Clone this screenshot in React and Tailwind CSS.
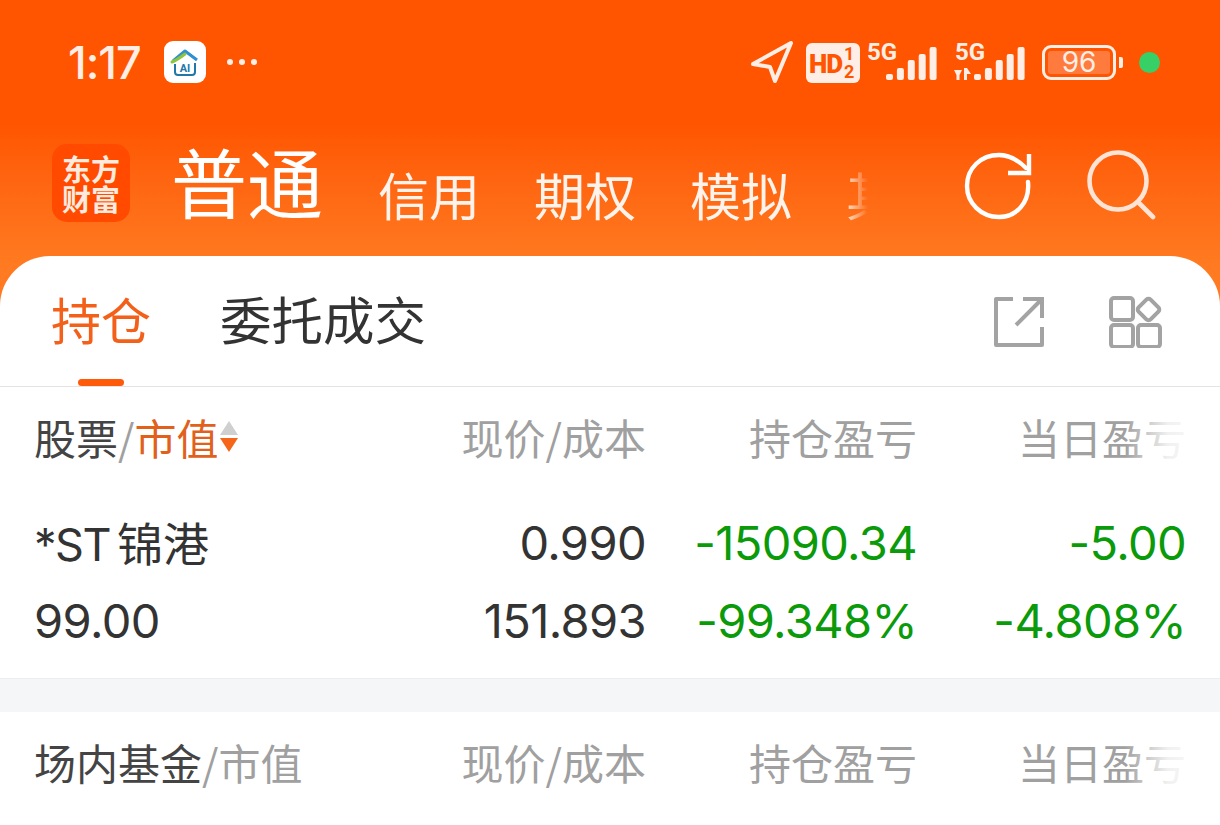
import React from "react";

const cjk = { fontFamily: '"Noto Sans CJK SC", sans-serif' };

const Bars = ({ heights, x = 0 }) => (
  <>
    {heights.map((h, i) => (
      <rect key={i} x={x + i * 10.9} y={38 - h} width="7" height={h} rx="2" fill="#ffeee5" />
    ))}
  </>
);

const StatusBar = () => (
  <div className="flex h-[125px] items-center justify-between pl-[68px] pr-[60px] pb-[1px]">
    <div className="flex items-center">
      <span className="w-[74px] text-[45px] font-medium leading-none tracking-[-1px] text-[#ffeee5] font-['Inter',sans-serif]">1:17</span>
      <div className="ml-[22px] flex h-[42px] w-[42px] items-center justify-center rounded-[9px] bg-white">
        <svg width="32" height="30" viewBox="0 0 32 30" fill="none">
          <path d="M4 14 L16 4 L28 13" stroke="#2f8fd0" strokeWidth="3" strokeLinejoin="round" />
          <path d="M3 15 C8 13 12 10 16 7" stroke="#8cc63f" strokeWidth="3" strokeLinecap="round" />
          <path d="M6 17 V25 C6 27 7 28 9 28 H23 C25 28 26 27 26 25 V16" stroke="#2277aa" strokeWidth="2" />
          <text x="16" y="25" textAnchor="middle" fontSize="11" fontWeight="700" fill="#2277aa" fontFamily="Roboto, sans-serif">AI</text>
        </svg>
      </div>
      <div className="ml-[21px] flex gap-[6px]">
        <span className="h-[6px] w-[6px] rounded-full bg-[#ffeee5]"></span>
        <span className="h-[6px] w-[6px] rounded-full bg-[#ffeee5]"></span>
        <span className="h-[6px] w-[6px] rounded-full bg-[#ffeee5]"></span>
      </div>
    </div>
    <div className="flex items-center">
      <svg width="44" height="44" viewBox="0 0 44 44" fill="none" className="mr-[12px]">
        <path d="M3 24 L41 3 L25 41 L20 27 Z" stroke="#ffeee5" strokeWidth="4" strokeLinejoin="round" />
      </svg>
      <div className="relative mt-[2px] h-[40px] w-[54px] rounded-[6px] bg-[#ffeee5] text-[#ff5500] font-['Roboto',sans-serif]">
        <span className="absolute left-[3px] top-[8px] text-[26px] font-black leading-none tracking-[-1px]">HD</span>
        <span className="absolute left-[38px] top-[2px] text-[18px] font-bold leading-none">1</span>
        <span className="absolute left-[38px] top-[20px] text-[18px] font-bold leading-none">2</span>
      </div>
      <div className="relative ml-[7px] h-[40px] w-[72px]">
        <span className="absolute left-0 top-[-2px] text-[24px] font-bold leading-none text-[#ffeee5] font-['Roboto',sans-serif]">5G</span>
        <svg width="72" height="40" viewBox="0 0 72 40">
          <Bars heights={[6, 12, 20, 26, 33]} x={19} />
        </svg>
      </div>
      <div className="relative ml-[15px] h-[40px] w-[72px]">
        <span className="absolute left-[1px] top-[-2px] text-[24px] font-bold leading-none text-[#ffeee5] font-['Roboto',sans-serif]">5G</span>
        <svg width="72" height="40" viewBox="0 0 72 40">
          <path d="M0 28 H8 L5.5 33 V38 H2.5 V33 Z M10 38 V26 H13 L17 32 H13 V38 Z" fill="#ffeee5" />
          <Bars heights={[6, 12, 20, 26, 33]} x={20} />
        </svg>
      </div>
      <div className="ml-[16px] flex items-center">
        <div className="flex h-[35px] w-[74px] items-center rounded-[9px] border-[3px] border-[#ffeee5] p-[3px]">
          <div className="flex h-full w-full items-center justify-center rounded-[3px] bg-[#ff7b3d] text-[28px] leading-none text-[#ffeee5] font-['Inter',sans-serif]">96</div>
        </div>
        <div className="ml-[3px] h-[11px] w-[4px] rounded-r-[2px] bg-[#ffeee5]"></div>
      </div>
      <div className="ml-[16px] h-[21px] w-[21px] rounded-full bg-[#37d066]"></div>
    </div>
  </div>
);

const RefreshIcon = () => (
  <svg width="70" height="70" viewBox="0 0 70 70" fill="none" stroke="#fff" strokeWidth="4.4">
    <path d="M64 31 C66 52 52 66 35 66 C17 66 3 52 3 35 C3 17 17 4 35 4 C45 4 54 9 62 17" strokeLinecap="round" />
    <path d="M65 3 V22 H44" />
  </svg>
);

const SearchIcon = () => (
  <svg width="70" height="70" viewBox="0 0 70 70" fill="none" stroke="#ffe4d6" strokeWidth="4.6">
    <circle cx="31" cy="31" r="28.5" />
    <path d="M52 53 L66 67" strokeLinecap="round" />
  </svg>
);

const Header = () => (
  <div className="flex h-[131px] items-start pl-[52px]">
    <div className="mt-[19px] flex h-[78px] w-[78px] flex-col items-center justify-center rounded-[15px] bg-[#ff4a00] text-[29px] font-bold leading-[30px] text-[#ffeadf]" style={cjk}>
      <span>东方</span>
      <span>财富</span>
    </div>
    <div className="ml-[41px] mt-[9px] text-[76px] leading-[92px] text-white" style={cjk}>普通</div>
    <div className="ml-[55px] mt-[36px] flex w-[491px] gap-[54px] overflow-hidden text-[51px] leading-[66px] text-[#fff3ec] [mask-image:linear-gradient(to_right,black_465px,transparent_490px)]" style={cjk}>
      <span className="shrink-0">信用</span>
      <span className="shrink-0">期权</span>
      <span className="shrink-0">模拟</span>
      <span className="shrink-0">其他</span>
    </div>
    <div className="ml-[95px] mt-[26px]"><RefreshIcon /></div>
    <div className="ml-[53px] mt-[25px]"><SearchIcon /></div>
  </div>
);

const Tabs = () => (
  <div className="flex h-[131px] items-start border-b border-[#e4e4e4] pl-[51px] pr-[57px]" style={cjk}>
    <div className="relative h-[130px] w-[100px]">
      <span className="absolute left-0 top-[26px] whitespace-nowrap text-[50px] leading-[72px] text-[#f2601a]">持仓</span>
      <div className="absolute bottom-0 left-[27px] h-[7px] w-[46px] rounded-full bg-[#ff5a0a]"></div>
    </div>
    <span className="ml-[69px] mt-[26px] text-[51.5px] leading-[72px] text-[#333]">委托成交</span>
    <div className="ml-auto mt-[40px] flex items-center gap-[64px]">
      <svg width="52" height="52" viewBox="0 0 52 52" fill="none" stroke="#a3a3a3" strokeWidth="4">
        <path d="M20 3 H3 V49 H49 V31" strokeLinejoin="round" />
        <path d="M30 3 H49 V22 M49 3 L23 29" />
      </svg>
      <svg width="54" height="52" viewBox="0 0 54 52" fill="none" stroke="#a3a3a3" strokeWidth="4">
        <rect x="2" y="2" width="22" height="22" rx="3" />
        <rect x="2" y="29" width="22" height="22" rx="3" />
        <rect x="29" y="29" width="22" height="22" rx="3" />
        <rect x="31" y="5" width="17" height="17" rx="3" transform="rotate(45 39.5 13.5)" />
      </svg>
    </div>
  </div>
);

const TableHead = ({ first }) => (
  <div className="relative grid h-[105px] grid-cols-[1fr_230px_271px_269px] items-center pb-[6px] pl-[34px] pr-[34px] text-[42px] leading-none text-[#a0a0a0]" style={cjk}>
    <div className="flex items-center whitespace-nowrap">{first}</div>
    <div className="whitespace-nowrap text-right">现价/成本</div>
    <div className="text-right">持仓盈亏</div>
    <div className="text-right">当日盈亏</div>
    <div className="absolute inset-y-0 right-0 w-[95px] bg-gradient-to-r from-transparent via-white/85 via-[45%] to-white"></div>
  </div>
);

const Row = ({ a, b, c, d }) => (
  <div className="grid h-[78px] grid-cols-[1fr_230px_271px_269px] items-center pl-[34px] pr-[34px] text-[47px] leading-none tracking-[-0.6px] text-[#0a9a0a]">
    <div className="text-[#333]">{a}</div>
    <div className="text-right text-[#333]">{b}</div>
    <div className="text-right">{c}</div>
    <div className="text-right">{d}</div>
  </div>
);

export default function App() {
  return (
    <div className="flex h-[825px] w-[1220px] flex-col overflow-hidden bg-gradient-to-b from-[#ff5500] from-[15%] to-[#ff7a20] to-[32%] font-['Inter',sans-serif]">
      <StatusBar />
      <Header />
      <div className="flex-1 rounded-t-[50px] bg-white">
        <Tabs />
        <TableHead
          first={
            <>
              <span className="text-[#444]">股票</span>
              <span className="text-[#a0a0a0]">/</span>
              <span className="text-[#e0601c]">市值</span>
              <span className="ml-[1px] flex flex-col gap-[3px]">
                <span className="h-0 w-0 border-x-[9px] border-b-[14px] border-x-transparent border-b-[#cfcfcf]"></span>
                <span className="h-0 w-0 border-x-[9px] border-t-[14px] border-x-transparent border-t-[#f5651a]"></span>
              </span>
            </>
          }
        />
        <div className="pb-[19px] pt-[11px]">
          <Row
            a={<span className="whitespace-nowrap text-[45px] tracking-[-1.5px]">*ST<span className="ml-[7px] text-[46px] tracking-normal" style={cjk}>锦港</span></span>}
            b="0.990"
            c="-15090.34"
            d="-5.00"
          />
          <Row a="99.00" b="151.893" c="-99.348%" d="-4.808%" />
        </div>
        <div className="h-[34px] border-t border-[#ebedf0] bg-[#f5f6f8]"></div>
        <TableHead
          first={
            <>
              <span className="text-[#444]">场内基金</span>
              <span className="text-[#a0a0a0]">/市值</span>
            </>
          }
        />
      </div>
    </div>
  );
}
